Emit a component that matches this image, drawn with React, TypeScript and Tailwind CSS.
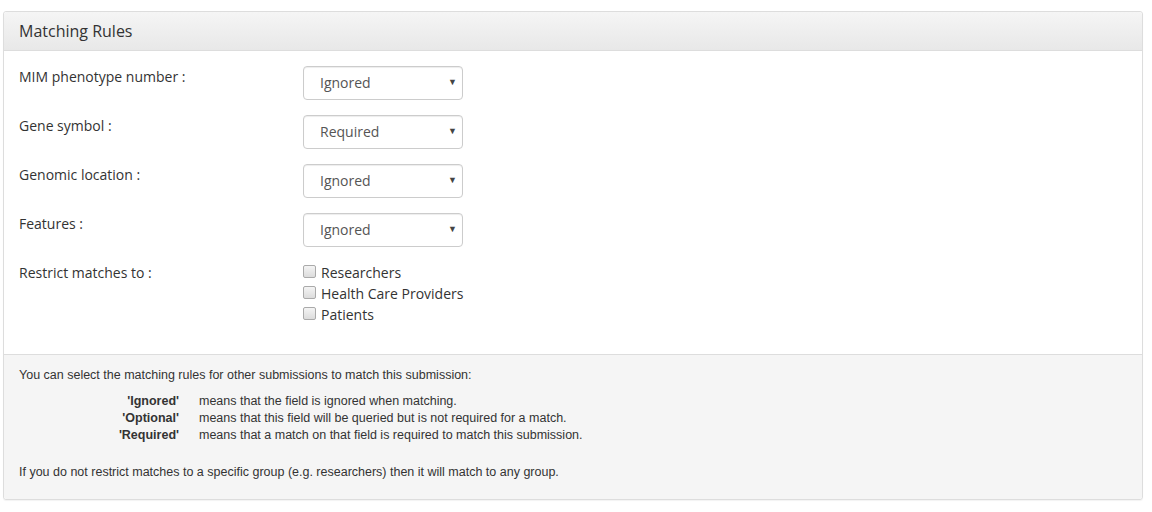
import React from 'react';

const rules = [
  { label: 'MIM phenotype number :', value: 'Ignored' },
  { label: 'Gene symbol :', value: 'Required' },
  { label: 'Genomic location :', value: 'Ignored' },
  { label: 'Features :', value: 'Ignored' },
];

const groups = ['Researchers', 'Health Care Providers', 'Patients'];

const legend = [
  { term: "'Ignored'", text: 'means that the field is ignored when matching.' },
  { term: "'Optional'", text: 'means that this field will be queried but is not required for a match.' },
  { term: "'Required'", text: 'means that a match on that field is required to match this submission.' },
];

const App: React.FC = () => {
  return (
    <div className="w-[1152px] h-[512px] bg-white pt-[11px] pl-[3px] pr-[9px] font-['Open_Sans',sans-serif] text-[#333]">
      <div className="border border-[#ddd] rounded-[3px] shadow-[0_1px_1px_rgba(0,0,0,0.05)]">
        <div className="h-[39px] flex items-center px-[15px] bg-gradient-to-b from-[#f5f5f5] to-[#e8e8e8] border-b border-[#ddd] rounded-t-[3px]">
          <h3 className="text-[16px]">Matching Rules</h3>
        </div>

        <div className="px-[15px] pt-[15px] pb-[29px]">
          {rules.map((r) => (
            <div key={r.label} className="flex h-[49px]">
              <div className="w-[284px] text-[14px] leading-[20px] pt-[1px]">{r.label}</div>
              <div className="relative w-[160px] h-[34px]">
                <div className="h-full border border-[#ccc] rounded-[4px] shadow-[inset_0_1px_1px_rgba(0,0,0,0.075)] flex items-center pl-[16px] pb-[1px] text-[14px] text-[#555]">
                  {r.value}
                </div>
                <span className="absolute right-[6px] top-[9px] text-[9px] text-[#444]">▼</span>
              </div>
            </div>
          ))}
          <div className="flex">
            <div className="w-[284px] text-[14px] leading-[20px] pt-[1px]">Restrict matches to :</div>
            <div className="flex flex-col">
              {groups.map((g) => (
                <label key={g} className="flex items-center h-[21px] text-[14px]">
                  <span className="w-[13px] h-[13px] border border-[#aaa] rounded-[2px] bg-gradient-to-b from-[#f4f4f4] to-[#dcdcdc] mr-[5px] -mt-[2px]" />
                  {g}
                </label>
              ))}
            </div>
          </div>
        </div>

        <div className="bg-[#f5f5f5] border-t border-[#ddd] px-[15px] pt-[12px] pb-[18px] text-[12.5px] leading-[17px] font-['Liberation_Sans',sans-serif] text-[#333] rounded-b-[3px]">
          <p>You can select the matching rules for other submissions to match this submission:</p>
          <div className="mt-[9px] grid grid-cols-[160px_1fr] gap-x-[20px]">
            {legend.map((l) => (
              <React.Fragment key={l.term}>
                <div className="text-right font-bold">{l.term}</div>
                <div>{l.text}</div>
              </React.Fragment>
            ))}
          </div>
          <p className="mt-[20px]">If you do not restrict matches to a specific group (e.g. researchers) then it will match to any group.</p>
        </div>
      </div>
    </div>
  );
};

export default App;
